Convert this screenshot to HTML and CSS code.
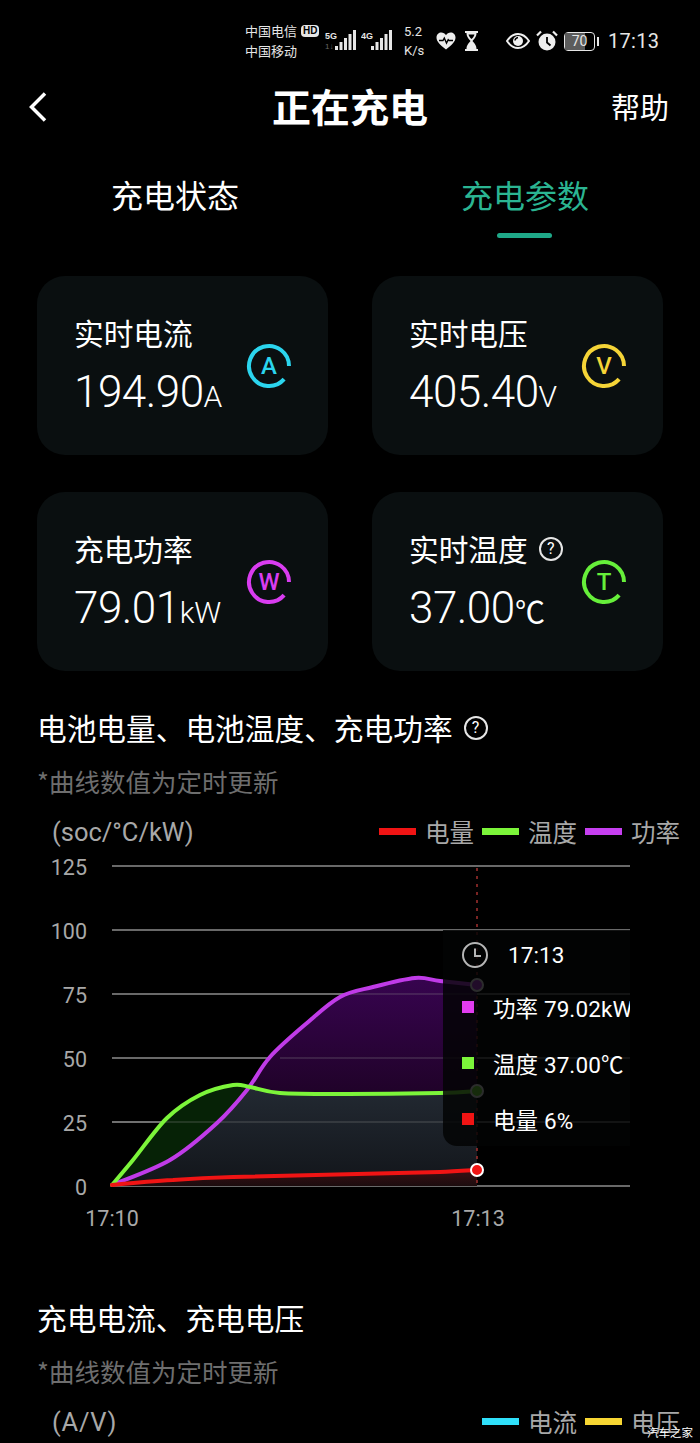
FILE: index.html
```html
<!DOCTYPE html>
<html lang="zh-CN">
  <head>
    <meta charset="UTF-8" />
    <meta name="viewport" content="width=device-width, initial-scale=1.0" />
    <title>正在充电</title>
    <link rel="stylesheet" href="styles.css">
  </head>
  <body>
    <div class="page">
      <!-- Status bar -->
      <div class="status">
        <div class="carrier">
          <div class="carrier-line">中国电信<span class="hd">HD</span></div>
          <div class="carrier-line">中国移动</div>
        </div>
        <svg class="ic-signal-a" width="32" height="22" viewBox="0 0 32 22">
          <text class="net" x="0" y="9">5G</text>
          <text class="net-dim" x="0" y="19">1↓</text>
          <path d="M10 16h3v4h-3zM14.500 12h3v8h-3zM19 8h3v12h-3zM23.500 4h3v16h-3zM28 0h3v20h-3z" fill="#e6e6e6" />
        </svg>
        <svg class="ic-signal-b" width="32" height="22" viewBox="0 0 32 22">
          <text class="net" x="0" y="9">4G</text>
          <path d="M10 16h3v4h-3zM14.500 12h3v8h-3zM19 8h3v12h-3zM23.500 4h3v16h-3zM28 0h3v20h-3z" fill="#e6e6e6" />
        </svg>
        <div class="speed">
          <div>5.2</div>
          <div>K/s</div>
        </div>
        <svg class="ic-heart" width="20" height="18" viewBox="0 0 20 18">
          <path d="M10 17.500C4 13 0.500 9.500 0.500 5.500 0.500 2.500 2.800 0.500 5.300 0.500 7.200 0.500 9 1.500 10 3.200 11 1.500 12.800 0.500 14.700 0.500 17.200 0.500 19.500 2.500 19.500 5.500 19.500 9.500 16 13 10 17.500Z" fill="#ededed" />
          <path d="M3 8.500h4l1.300-2.500 2.200 5 1.700-3.300 0.800 0.800h4" fill="none" stroke="#000" stroke-width="1.400" />
        </svg>
        <svg class="ic-glass" width="15" height="20" viewBox="0 0 15 20">
          <path d="M1 1h13M1 19h13" stroke="#ededed" stroke-width="2" />
          <path d="M2.500 2h10c0 4-2.500 6-4 8 1.500 2 4 4 4 8h-10c0-4 2.500-6 4-8-1.500-2-4-4-4-8Z" fill="#ededed" />
          <path d="M4.500 3.500h6c-0.500 2-2 3.500-3 4.500-1-1-2.500-2.500-3-4.500Z" fill="#000" />
        </svg>
        <svg class="ic-eye" width="24" height="18" viewBox="0 0 24 18">
          <path d="M1 9C4 4.500 8 2 12 2s8 2.500 11 7c-3 4.500-7 7-11 7S4 13.500 1 9Z" fill="none" stroke="#f0f0f0" stroke-width="2" />
          <circle cx="12" cy="9" r="5" fill="#f0f0f0" />
          <path d="M9 8.500a3.500 3.500 0 0 1 3-3" fill="none" stroke="#000" stroke-width="1.500" />
        </svg>
        <svg class="ic-alarm" width="22" height="22" viewBox="0 0 22 22">
          <circle cx="11" cy="12" r="8.500" fill="#ededed" />
          <path d="M11 7v5.500l3.500 3" fill="none" stroke="#000" stroke-width="1.800" />
          <path d="M1 5.500 5 1.500M21 5.500l-4-4" stroke="#ededed" stroke-width="2.200" />
        </svg>
        <div class="battery">
          <div class="battery-body">
            <div class="battery-fill"></div>
            <span class="battery-num">70</span>
          </div>
          <div class="battery-nub"></div>
        </div>
        <div class="clock">17:13</div>
      </div>

      <!-- Title -->
      <div class="header">
        <svg class="back" width="20" height="32" viewBox="0 0 20 32">
          <path d="M17 2.500 3.500 16 17 29.500" fill="none" stroke="#fff" stroke-width="3.500" />
        </svg>
        <div class="title">正在充电</div>
        <div class="help">帮助</div>
      </div>

      <!-- Tabs -->
      <div class="tabs">
        <div class="tab">充电状态</div>
        <div class="tab tab-active">充电参数</div>
      </div>

      <!-- Live values -->
      <div class="cards">
        <div class="card">
          <div class="card-text">
            <div class="card-label">实时电流</div>
            <div class="card-value">194.90<span class="unit">A</span></div>
          </div>
          <svg class="gauge gauge-a" width="48" height="48" viewBox="0 0 48 48">
            <path d="M44 24A20 20 0 1 0 39.100 37.100" />
            <text x="24" y="32">A</text>
          </svg>
        </div>
        <div class="card">
          <div class="card-text">
            <div class="card-label">实时电压</div>
            <div class="card-value">405.40<span class="unit">V</span></div>
          </div>
          <svg class="gauge gauge-v" width="48" height="48" viewBox="0 0 48 48">
            <path d="M44 24A20 20 0 1 0 39.100 37.100" />
            <text x="24" y="32">V</text>
          </svg>
        </div>
        <div class="card">
          <div class="card-text">
            <div class="card-label">充电功率</div>
            <div class="card-value">79.01<span class="unit">kW</span></div>
          </div>
          <svg class="gauge gauge-w" width="48" height="48" viewBox="0 0 48 48">
            <path d="M44 24A20 20 0 1 0 39.100 37.100" />
            <text x="24" y="32">W</text>
          </svg>
        </div>
        <div class="card">
          <div class="card-text">
            <div class="card-label">实时温度<span class="qmark">?</span></div>
            <div class="card-value">37.00<span class="unit">℃</span></div>
          </div>
          <svg class="gauge gauge-t" width="48" height="48" viewBox="0 0 48 48">
            <path d="M44 24A20 20 0 1 0 39.100 37.100" />
            <text x="24" y="32">T</text>
          </svg>
        </div>
      </div>

      <!-- Battery chart -->
      <div class="section">
        <div class="section-title">电池电量、电池温度、充电功率<span class="qmark">?</span></div>
        <div class="section-note">*曲线数值为定时更新</div>
        <div class="chart-head">
          <div class="chart-unit">(soc/°C/kW)</div>
          <div class="legend">
            <div class="legend-item"><span class="swatch swatch-red"></span>电量</div>
            <div class="legend-item"><span class="swatch swatch-green"></span>温度</div>
            <div class="legend-item"><span class="swatch swatch-purple"></span>功率</div>
          </div>
        </div>
      </div>
      <div class="plot">
        <svg width="700" height="391" viewBox="0 849 700 391">
          <defs>
            <linearGradient id="fillPurple" x1="0" y1="978" x2="0" y2="1186" gradientUnits="userSpaceOnUse">
              <stop offset="0" stop-color="#37044f" />
              <stop offset="0.55" stop-color="#200229" />
              <stop offset="1" stop-color="#120316" />
            </linearGradient>
            <linearGradient id="fillMix" x1="0" y1="1085" x2="0" y2="1186" gradientUnits="userSpaceOnUse">
              <stop offset="0" stop-color="#232a33" />
              <stop offset="1" stop-color="#12151a" />
            </linearGradient>
            <linearGradient id="fillRed" x1="0" y1="1170" x2="0" y2="1186" gradientUnits="userSpaceOnUse">
              <stop offset="0" stop-color="#3a1014" />
              <stop offset="1" stop-color="#1c0c0e" />
            </linearGradient>
            <clipPath id="underPurple">
              <path d="M112 1185C121.700 1180.800 152.500 1170.300 170 1160C187.500 1149.700 204.200 1134.700 217 1123C229.800 1111.300 238.200 1101 247 1090C255.800 1079 260 1068.200 270 1057C280 1045.800 295.300 1033 307 1023C318.700 1013 329 1003 340 997C351 991 360.500 990.200 373 987C385.500 983.800 403.800 979 415 978C426.200 977 429.700 979.800 440 981C450.300 982.200 470.800 984.300 477 985V1186H112Z" />
            </clipPath>
          </defs>

          <g class="grid-lines">
            <line x1="112" y1="866" x2="630" y2="866" />
            <line x1="112" y1="930" x2="630" y2="930" />
            <line x1="112" y1="994" x2="630" y2="994" />
            <line x1="112" y1="1058" x2="630" y2="1058" />
            <line x1="112" y1="1122" x2="630" y2="1122" />
            <line x1="112" y1="1186" x2="630" y2="1186" />
          </g>
          <g class="axis-y">
            <text x="87" y="875">125</text>
            <text x="87" y="939">100</text>
            <text x="87" y="1003">75</text>
            <text x="87" y="1067">50</text>
            <text x="87" y="1131">25</text>
            <text x="87" y="1195">0</text>
          </g>
          <g class="axis-x">
            <text x="112" y="1226">17:10</text>
            <text x="478" y="1226">17:13</text>
          </g>

          <!-- Areas -->
          <path fill="url(#fillPurple)" d="M112 1185C121.700 1180.800 152.500 1170.300 170 1160C187.500 1149.700 204.200 1134.700 217 1123C229.800 1111.300 238.200 1101 247 1090C255.800 1079 260 1068.200 270 1057C280 1045.800 295.300 1033 307 1023C318.700 1013 329 1003 340 997C351 991 360.500 990.200 373 987C385.500 983.800 403.800 979 415 978C426.200 977 429.700 979.800 440 981C450.300 982.200 470.800 984.300 477 985V1186H112Z" />
          <path fill="#062206" d="M112 1185C115.500 1180.800 123.800 1171.200 133 1160C142.200 1148.800 155.800 1128.800 167 1118C178.200 1107.200 189 1100.500 200 1095C211 1089.500 224.700 1086.300 233 1085C241.300 1083.700 242.200 1085.700 250 1087C257.800 1088.300 263.800 1091.800 280 1093C296.200 1094.200 320.300 1094 347 1094C373.700 1094 418.300 1093.500 440 1093C461.700 1092.500 470.800 1091.300 477 1091V1186H112Z" />
          <path clip-path="url(#underPurple)" fill="url(#fillMix)" d="M112 1185C115.500 1180.800 123.800 1171.200 133 1160C142.200 1148.800 155.800 1128.800 167 1118C178.200 1107.200 189 1100.500 200 1095C211 1089.500 224.700 1086.300 233 1085C241.300 1083.700 242.200 1085.700 250 1087C257.800 1088.300 263.800 1091.800 280 1093C296.200 1094.200 320.300 1094 347 1094C373.700 1094 418.300 1093.500 440 1093C461.700 1092.500 470.800 1091.300 477 1091V1186H112Z" />
          <path fill="url(#fillRed)" d="M112 1185C132 1183 153 1181 173 1180C193 1178.500 213 1177.500 233 1177C300 1175.500 370 1174 440 1172C452 1171.500 465 1170.700 477 1170V1186H112Z" />
          <line class="grid-over" x1="112" y1="1122" x2="477" y2="1122" />
          <line class="grid-over" x1="280" y1="1058" x2="477" y2="1058" />
          <line class="grid-over" x1="340" y1="994" x2="477" y2="994" />

          <line class="marker" x1="477" y1="868" x2="477" y2="1186" />

          <!-- Lines -->
          <path class="curve curve-purple" d="M112 1185C121.700 1180.800 152.500 1170.300 170 1160C187.500 1149.700 204.200 1134.700 217 1123C229.800 1111.300 238.200 1101 247 1090C255.800 1079 260 1068.200 270 1057C280 1045.800 295.300 1033 307 1023C318.700 1013 329 1003 340 997C351 991 360.500 990.200 373 987C385.500 983.800 403.800 979 415 978C426.200 977 429.700 979.800 440 981C450.300 982.200 470.800 984.300 477 985" />
          <path class="curve curve-green" d="M112 1185C115.500 1180.800 123.800 1171.200 133 1160C142.200 1148.800 155.800 1128.800 167 1118C178.200 1107.200 189 1100.500 200 1095C211 1089.500 224.700 1086.300 233 1085C241.300 1083.700 242.200 1085.700 250 1087C257.800 1088.300 263.800 1091.800 280 1093C296.200 1094.200 320.300 1094 347 1094C373.700 1094 418.300 1093.500 440 1093C461.700 1092.500 470.800 1091.300 477 1091" />
          <path class="curve curve-red" d="M112 1185C132 1183 153 1181 173 1180C193 1178.500 213 1177.500 233 1177C300 1175.500 370 1174 440 1172C452 1171.500 465 1170.700 477 1170" />

          <circle class="dot" cx="477" cy="985" r="6" fill="#c03be8" />
          <circle class="dot" cx="477" cy="1091" r="6" fill="#7cf53a" />
          <circle class="dot" cx="477" cy="1170" r="6" fill="#f01414" />
        </svg>

        <div class="tooltip">
          <div class="tip-time">
            <svg width="28" height="28" viewBox="0 0 28 28">
              <circle cx="14" cy="14" r="12" fill="none" stroke="#b5b5b5" stroke-width="2" />
              <path d="M14 7.500V15h6" fill="none" stroke="#b5b5b5" stroke-width="2" />
            </svg>
            <span>17:13</span>
          </div>
          <div class="tip-row"><span class="tip-dot tip-purple"></span>功率 79.02kW</div>
          <div class="tip-row"><span class="tip-dot tip-green"></span>温度 37.00℃</div>
          <div class="tip-row"><span class="tip-dot tip-red"></span>电量 6%</div>
        </div>
      </div>

      <!-- Current / voltage chart -->
      <div class="section section-second">
        <div class="section-title">充电电流、充电电压</div>
        <div class="section-note">*曲线数值为定时更新</div>
        <div class="chart-head">
          <div class="chart-unit">(A/V)</div>
          <div class="legend">
            <div class="legend-item"><span class="swatch swatch-cyan"></span>电流</div>
            <div class="legend-item"><span class="swatch swatch-yellow"></span>电压</div>
          </div>
        </div>
      </div>

      <div class="watermark">汽车之家</div>
    </div>
  </body>
</html>
```

FILE: styles.css
```css
html, body {
  margin: 0;
  padding: 0;
  background-color: #000;
}

.page {
  position: relative;
  width: 700px;
  height: 1443px;
  overflow: hidden;
  color: #fff;
  font-family: "Noto Sans CJK SC", "Noto Sans", sans-serif;
}

/* Status bar */
.status {
  display: flex;
  align-items: center;
  height: 82px;
  padding-left: 245px;
  color: #e6e6e6;
}

.carrier {
  width: 80px;
  font-size: 13px;
  line-height: 20px;
}

.carrier-line {
  display: flex;
  align-items: center;
  height: 20px;
}

.hd {
  margin-left: 4px;
  padding: 0 2px;
  height: 12px;
  border-radius: 4px;
  background-color: #e6e6e6;
  color: #000;
  font-family: "Liberation Sans", sans-serif;
  font-size: 10px;
  font-weight: 700;
  line-height: 12px;
}

.net {
  fill: #e6e6e6;
  font-family: "Liberation Sans", sans-serif;
  font-size: 9px;
  font-weight: 700;
}

.net-dim {
  fill: #666;
  font-family: "Liberation Sans", sans-serif;
  font-size: 8px;
}

.ic-signal-b {
  margin-left: 4px;
}

.speed {
  width: 24px;
  margin-left: 11px;
  font-family: Roboto, sans-serif;
  font-size: 13px;
  line-height: 19px;
}

.ic-heart {
  margin-left: 8px;
}

.ic-glass {
  margin-left: 8px;
}

.ic-eye {
  margin-left: 27px;
}

.ic-alarm {
  margin-left: 6px;
}

.battery {
  display: flex;
  align-items: center;
  margin-left: 6px;
}

.battery-body {
  position: relative;
  box-sizing: border-box;
  width: 31px;
  height: 19px;
  border: 1.5px solid #e6e6e6;
  border-radius: 4px;
}

.battery-fill {
  width: 20px;
  height: 100%;
  background-color: #5c5c5c;
}

.battery-num {
  position: absolute;
  top: 0;
  left: 0;
  right: 0;
  font-family: Roboto, sans-serif;
  font-size: 14px;
  line-height: 16px;
  text-align: center;
}

.battery-nub {
  width: 2px;
  height: 9px;
  margin-left: 2px;
  background-color: #e6e6e6;
}

.clock {
  margin-left: 9px;
  font-family: Roboto, sans-serif;
  font-size: 20px;
  letter-spacing: 0.3px;
}

/* Title */
.header {
  position: relative;
  display: flex;
  align-items: center;
  justify-content: center;
  height: 50px;
}

.back {
  position: absolute;
  left: 28px;
  top: 9px;
}

.title {
  margin-bottom: 4px;
  font-size: 39px;
  font-weight: 700;
  line-height: 50px;
}

.help {
  position: absolute;
  right: 31px;
  top: 4px;
  font-size: 29px;
  line-height: 40px;
}

/* Tabs */
.tabs {
  display: grid;
  grid-template-columns: 350px 350px;
  margin-top: 42px;
}

.tab {
  font-size: 32px;
  line-height: 40px;
  text-align: center;
}

.tab-active {
  position: relative;
  color: #2bb592;
}

.tab-active::after {
  content: "";
  position: absolute;
  left: 147px;
  top: 59px;
  width: 55px;
  height: 5px;
  border-radius: 3px;
  background-color: #1fa888;
}

/* Cards */
.cards {
  display: grid;
  grid-template-columns: 291px 291px;
  grid-auto-rows: 179px;
  gap: 37px 44px;
  margin-top: 62px;
  padding: 0 37px;
}

.card {
  display: flex;
  align-items: center;
  justify-content: space-between;
  padding: 0 35px 0 37px;
  border-radius: 28px;
  background-color: #0a0f10;
}

.card-text {
  margin-top: 6px;
}

.card-label {
  display: flex;
  align-items: center;
  font-size: 29.700px;
  line-height: 40px;
}

.card-value {
  margin-top: 11px;
  font-family: Roboto, sans-serif;
  font-size: 44px;
  font-weight: 300;
  letter-spacing: -0.5px;
  line-height: 56px;
}

.unit {
  font-size: 30px;
  font-weight: 300;
  letter-spacing: 0;
}

.gauge {
  margin-top: 1px;
  fill: none;
  stroke-width: 4;
}

.gauge text {
  font-family: Roboto, sans-serif;
  font-size: 24px;
  font-weight: 500;
  stroke: none;
  text-anchor: middle;
}

.gauge-a path { stroke: #2bd5ee; }
.gauge-a text { fill: #2bd5ee; }
.gauge-v path { stroke: #f5d437; }
.gauge-v text { fill: #f5d437; }
.gauge-w path { stroke: #d93cf0; }
.gauge-w text { fill: #d93cf0; }
.gauge-t path { stroke: #66ef3a; }
.gauge-t text { fill: #66ef3a; }

.qmark {
  display: inline-block;
  box-sizing: border-box;
  width: 24px;
  height: 24px;
  margin-left: 11px;
  border: 2px solid #e6e6e6;
  border-radius: 50%;
  font-family: Roboto, sans-serif;
  font-size: 16px;
  line-height: 20px;
  text-align: center;
}

/* Sections */
.section {
  margin-top: 37px;
  padding-left: 37px;
}

.section-second {
  margin-top: 58px;
}

.section-title {
  display: flex;
  align-items: center;
  font-size: 29.700px;
  line-height: 40px;
}

.section-note {
  margin-top: 16px;
  color: #6e6e6e;
  font-size: 25.500px;
  line-height: 34px;
}

.chart-head {
  display: flex;
  align-items: center;
  justify-content: space-between;
  margin-top: 17px;
  padding: 0 20px 0 15px;
  color: #a8a8a8;
  line-height: 34px;
}

.chart-unit {
  font-family: Roboto, sans-serif;
  font-size: 25.500px;
}

.section-second .chart-unit {
  letter-spacing: 0.8px;
}

.legend {
  display: flex;
  gap: 8px;
  font-size: 24.500px;
}

.legend-item {
  display: flex;
  align-items: center;
  gap: 9px;
}

.swatch {
  width: 37px;
  height: 7px;
  margin-bottom: 2px;
}

.swatch-red { background-color: #f01414; }
.swatch-green { background-color: #7cf53a; }
.swatch-purple { background-color: #c63ff0; }
.swatch-cyan { background-color: #2fe0fa; }
.swatch-yellow { background-color: #f7d633; }

/* Chart */
.plot {
  position: relative;
  height: 391px;
}

.plot svg {
  display: block;
}

.grid-lines line {
  stroke: #8c8c8c;
  stroke-width: 1.500;
}

.grid-over {
  stroke: #8c8c8c;
  stroke-width: 1;
  stroke-opacity: 0.45;
}

.axis-y text, .axis-x text {
  fill: #a8a8a8;
  font-family: Roboto, sans-serif;
  font-size: 21.500px;
}

.axis-y text {
  text-anchor: end;
}

.axis-x text {
  text-anchor: middle;
}

.marker {
  stroke: #a3302f;
  stroke-width: 1.500;
  stroke-dasharray: 3 5;
}

.curve {
  fill: none;
  stroke-width: 4;
  stroke-linecap: round;
}

.curve-purple { stroke: #c03be8; }
.curve-green { stroke: #7cf53a; }
.curve-red { stroke: #f01414; }

.dot {
  stroke: #fff;
  stroke-width: 2;
}

.tooltip {
  position: absolute;
  left: 443px;
  top: 81px;
  box-sizing: border-box;
  width: 187px;
  height: 216px;
  overflow: hidden;
  border-bottom-left-radius: 14px;
  background-color: rgba(2, 3, 4, 0.84);
  font-family: Roboto, "Noto Sans CJK SC", sans-serif;
  font-size: 22.500px;
  letter-spacing: 0.1px;
  white-space: nowrap;
}

.tip-time {
  display: flex;
  align-items: center;
  gap: 19px;
  height: 28px;
  margin: 11px 0 0 18px;
}

.tip-row {
  display: flex;
  align-items: center;
  gap: 19px;
  height: 30px;
  margin-top: 26px;
  padding-left: 19px;
}

.tip-time + .tip-row {
  margin-top: 23px;
}

.tip-dot {
  flex: none;
  width: 12px;
  height: 12px;
}

.tip-purple { background-color: #e23cf0; }
.tip-green { background-color: #7cf53a; }
.tip-red { background-color: #f01414; }

.watermark {
  position: absolute;
  right: 7px;
  bottom: 3px;
  font-size: 11.500px;
  line-height: 16px;
}
```
